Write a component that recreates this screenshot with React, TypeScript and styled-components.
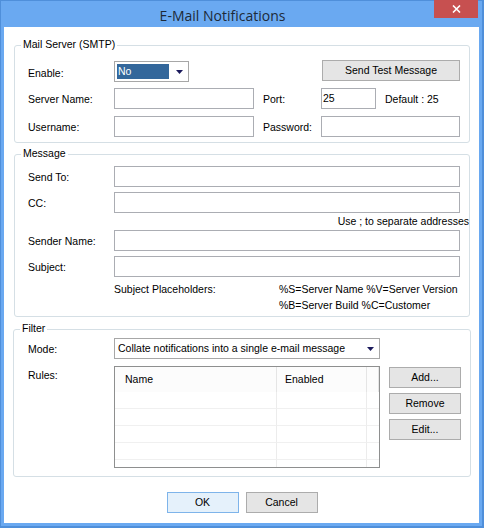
import React from "react";
import styled, { createGlobalStyle } from "styled-components";

const GlobalStyle = createGlobalStyle`
  html, body { margin: 0; padding: 0; }
  body {
    width: 484px; height: 528px; overflow: hidden; background: #fff;
    font-family: "Liberation Sans", Arial, sans-serif;
    font-size: 10.5px; color: #000;
  }
  * { box-sizing: border-box; }
`;

const Window = styled.div`
  width: 484px;
  height: 528px;
  display: flex;
  flex-direction: column;
  background: #6aa9f1;
  border: 1px solid #4f8fda;
  border-right-width: 2px;
  border-bottom-width: 2px;
`;

const TitleBar = styled.div`
  flex: none;
  height: 26px;
  display: flex;
  align-items: flex-start;
`;

const Title = styled.div`
  flex: 1;
  padding: 5px 0 0 10px;
  line-height: 20px;
  text-align: center;
  font-family: "Open Sans", "Noto Sans", sans-serif;
  font-size: 14px;
  color: #1d2a38;
`;

const CloseButton = styled.div`
  flex: none;
  width: 44px;
  height: 18px;
  margin: -1px 4px 0 0;
  background: #c75050;
  display: flex;
  align-items: center;
  justify-content: center;
`;

const Client = styled.div`
  flex: 1;
  margin: 0 3px 3px 3px;
  background: #fff;
  padding: 18px 9px 0 10px;
  display: flex;
  flex-direction: column;
`;

const GroupBox = styled.div<{ $mt?: number; $wide?: boolean; $pad: string }>`
  position: relative;
  border: 1px solid #d5dfe5;
  border-radius: 3px;
  margin: ${(p) => p.$mt ?? 0}px ${(p) => (p.$wide ? -1 : 0)}px 0;
  padding: ${(p) => p.$pad};
`;

const GroupTitle = styled.span`
  position: absolute;
  top: -8px;
  left: 6px;
  padding: 0 2px;
  background: #fff;
  line-height: 13px;
`;

const Row = styled.div<{ $mt?: number; $h?: number; $align?: string }>`
  display: flex;
  align-items: ${(p) => p.$align ?? "center"};
  height: ${(p) => p.$h ?? 21}px;
  margin-top: ${(p) => p.$mt ?? 0}px;
`;

const Label = styled.span<{ $w?: number; $ml?: number; $pt?: number }>`
  flex: none;
  width: ${(p) => (p.$w ? `${p.$w}px` : "auto")};
  margin-left: ${(p) => p.$ml ?? 0}px;
  padding-top: ${(p) => p.$pt ?? 2}px;
  line-height: 13px;
  white-space: nowrap;
`;

const TextBox = styled.input<{ $w?: number }>`
  flex: ${(p) => (p.$w ? "none" : "1")};
  width: ${(p) => (p.$w ? `${p.$w}px` : "auto")};
  min-width: 0;
  height: 21px;
  margin: 0;
  padding: 0 1px 2px;
  border: 1px solid #abadb3;
  background: #fff;
  font: inherit;
  color: #000;
  outline: none;
`;

const SelectBox = styled.div<{ $w: number }>`
  flex: none;
  width: ${(p) => p.$w}px;
  height: 21px;
  border: 1px solid #a7a7a7;
  background: #fff;
  padding: 2px;
  display: flex;
  align-items: center;
`;

const SelectValue = styled.span<{ $selected?: boolean }>`
  flex: 1;
  height: 15px;
  padding-left: 1px;
  line-height: 15px;
  white-space: nowrap;
  overflow: hidden;
  background: ${(p) => (p.$selected ? "#33679b" : "transparent")};
  color: ${(p) => (p.$selected ? "#fff" : "#000")};
`;

const SelectArrow = styled.span`
  flex: none;
  width: 17px;
  height: 15px;
  display: flex;
  align-items: center;
  justify-content: flex-end;
  padding-right: 3px;
`;

const Button = styled.div<{ $w: number; $primary?: boolean; $ml?: string; $mt?: number }>`
  flex: none;
  width: ${(p) => p.$w}px;
  height: 21px;
  margin-left: ${(p) => p.$ml ?? "0"};
  margin-top: ${(p) => p.$mt ?? 0}px;
  border: 1px solid ${(p) => (p.$primary ? "#7eb4ea" : "#acacac")};
  background: ${(p) => (p.$primary ? "#e5f1fb" : "#e5e5e5")};
  display: flex;
  align-items: center;
  justify-content: center;
  line-height: 13px;
  white-space: nowrap;
`;

const HintRow = styled.div`
  height: 17px;
  margin-right: -9px;
  display: flex;
  align-items: center;
  justify-content: flex-end;
  line-height: 13px;
`;

const Placeholders = styled.div`
  display: grid;
  grid-template-columns: 165px auto;
  margin: 4px 0 0 86px;
  line-height: 16px;
`;

const ListView = styled.div`
  flex: none;
  width: 266px;
  height: 102px;
  border: 1px solid #8e8f8f;
  background: #fff;
  overflow: hidden;
`;

const ListGrid = styled.div`
  display: grid;
  grid-template-columns: 162px 90px 1fr;
`;

const HeaderCell = styled.div<{ $pl: number }>`
  height: 25px;
  padding-left: ${(p) => p.$pl}px;
  display: flex;
  align-items: center;
  background: #fcfcfc;
  border-right: 1px solid #e5e5e5;
  line-height: 13px;
  &:last-child { border-right: none; }
`;

const Cell = styled.div`
  height: 17px;
  border-bottom: 1px solid #f0f0f0;
  border-right: 1px solid #ececec;
  &:nth-child(3n) { border-right: none; }
`;

const SideButtons = styled.div`
  display: flex;
  flex-direction: column;
  gap: 5px;
  margin: 1px 0 0 9px;
`;

const DialogButtons = styled.div`
  display: flex;
  justify-content: center;
  gap: 7px;
  margin-top: 15px;
`;

const Arrow = () => (
  <svg width="7" height="4" viewBox="0 0 7 4">
    <polygon points="0,0 7,0 3.5,4" fill="#1b1a5c" />
  </svg>
);

export default function App() {
  const rows = Array.from({ length: 6 });
  return (
    <>
      <GlobalStyle />
      <Window>
        <TitleBar>
          <Title>E-Mail Notifications</Title>
          <CloseButton>
            <svg width="9" height="8" viewBox="0 0 9 8">
              <path d="M1 0.5 L8 7.5 M8 0.5 L1 7.5" stroke="#fff" strokeWidth="1.6" />
            </svg>
          </CloseButton>
        </TitleBar>
        <Client>
          <GroupBox $pad="15px 9px 5px 13px">
            <GroupTitle>Mail Server (SMTP)</GroupTitle>
            <Row>
              <Label $w={86} $pt={3}>Enable:</Label>
              <SelectBox $w={75}>
                <SelectValue $selected>No</SelectValue>
                <SelectArrow><Arrow /></SelectArrow>
              </SelectBox>
              <Button $w={138} $ml="auto" $mt={-2}>Send Test Message</Button>
            </Row>
            <Row $mt={6}>
              <Label $w={86}>Server Name:</Label>
              <TextBox $w={140} readOnly />
              <Label $w={58} $ml={9}>Port:</Label>
              <TextBox $w={55} readOnly defaultValue="25" />
              <Label $ml={9}>Default : 25</Label>
            </Row>
            <Row $mt={7}>
              <Label $w={86}>Username:</Label>
              <TextBox $w={140} readOnly />
              <Label $w={58} $ml={9}>Password:</Label>
              <TextBox readOnly />
            </Row>
          </GroupBox>

          <GroupBox $mt={11} $pad="11px 9px 3px 13px">
            <GroupTitle>Message</GroupTitle>
            <Row>
              <Label $w={86}>Send To:</Label>
              <TextBox readOnly />
            </Row>
            <Row $mt={5}>
              <Label $w={86}>CC:</Label>
              <TextBox readOnly />
            </Row>
            <HintRow>Use ; to separate addresses</HintRow>
            <Row>
              <Label $w={86}>Sender Name:</Label>
              <TextBox readOnly />
            </Row>
            <Row $mt={5}>
              <Label $w={86}>Subject:</Label>
              <TextBox readOnly />
            </Row>
            <Placeholders>
              <span>Subject Placeholders:</span>
              <span>
                %S=Server Name %V=Server Version
                <br />
                %B=Server Build %C=Customer
              </span>
            </Placeholders>
          </GroupBox>

          <GroupBox $mt={12} $wide $pad="8px 10px 8px 14px">
            <GroupTitle>Filter</GroupTitle>
            <Row>
              <Label $w={86}>Mode:</Label>
              <SelectBox $w={266}>
                <SelectValue>Collate notifications into a single e-mail message</SelectValue>
                <SelectArrow><Arrow /></SelectArrow>
              </SelectBox>
            </Row>
            <Row $mt={7} $h={102} $align="flex-start">
              <Label $w={86} $pt={3}>Rules:</Label>
              <ListView>
                <ListGrid>
                  <HeaderCell $pl={10}>Name</HeaderCell>
                  <HeaderCell $pl={8}>Enabled</HeaderCell>
                  <HeaderCell $pl={0} />
                  {rows.map((_, i) => (
                    <React.Fragment key={i}>
                      <Cell />
                      <Cell />
                      <Cell />
                    </React.Fragment>
                  ))}
                </ListGrid>
              </ListView>
              <SideButtons>
                <Button $w={72}>Add...</Button>
                <Button $w={72}>Remove</Button>
                <Button $w={72}>Edit...</Button>
              </SideButtons>
            </Row>
          </GroupBox>

          <DialogButtons>
            <Button $w={72} $primary>OK</Button>
            <Button $w={72}>Cancel</Button>
          </DialogButtons>
        </Client>
      </Window>
    </>
  );
}
